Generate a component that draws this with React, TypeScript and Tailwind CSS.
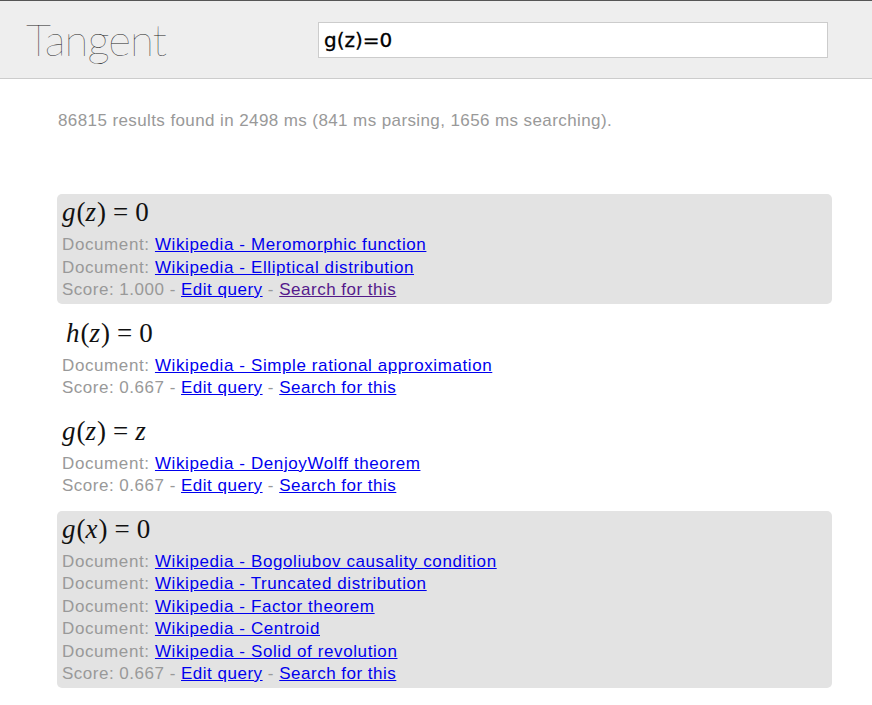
import React from 'react';

type Result = {
  formula: React.ReactNode;
  docs: string[];
  score: string;
  highlight: boolean;
  visited?: boolean;
  indent?: boolean;
};

const M: React.FC<{ children: React.ReactNode }> = ({ children }) => <i className="pr-[1px]">{children}</i>;
const Eq: React.FC = () => <span className="px-[7px]">=</span>;

const results: Result[] = [
  {
    formula: (
      <>
        <M>g</M>(<M>z</M>)<Eq />0
      </>
    ),
    docs: ['Wikipedia - Meromorphic function', 'Wikipedia - Elliptical distribution'],
    score: '1.000',
    highlight: true,
    visited: true,
  },
  {
    formula: (
      <>
        <M>h</M>(<M>z</M>)<Eq />0
      </>
    ),
    docs: ['Wikipedia - Simple rational approximation'],
    score: '0.667',
    highlight: false,
    indent: true,
  },
  {
    formula: (
      <>
        <M>g</M>(<M>z</M>)<Eq />
        <M>z</M>
      </>
    ),
    docs: ['Wikipedia - DenjoyWolff theorem'],
    score: '0.667',
    highlight: false,
  },
  {
    formula: (
      <>
        <M>g</M>(<M>x</M>)<Eq />0
      </>
    ),
    docs: [
      'Wikipedia - Bogoliubov causality condition',
      'Wikipedia - Truncated distribution',
      'Wikipedia - Factor theorem',
      'Wikipedia - Centroid',
      'Wikipedia - Solid of revolution',
    ],
    score: '0.667',
    highlight: true,
  },
];

const App: React.FC = () => {
  return (
    <div className="min-h-[705px] bg-white font-['Liberation_Sans',Arial,sans-serif]">
      <header className="h-[79px] bg-[#eeeeee] border-t border-t-[#555] border-b border-b-[#cccccc] flex items-start">
        <div className="ml-[26px] mt-[10px] w-[140px] text-[44px] leading-[56px] font-thin text-[#1a1a1a] font-['Lato',sans-serif] tracking-[-1px] whitespace-nowrap">
          Tangent
        </div>
        <div className="ml-[152px] mt-[21px] w-[510px] h-[36px] bg-white border border-[#cccccc] flex items-center pl-[5px]">
          <span className="text-[20px] text-black font-['DejaVu_Sans',sans-serif] [-webkit-text-stroke:0.3px_black]">
            g(z)=0
          </span>
        </div>
      </header>

      <div className="ml-[57px] w-[775px]">
        <p className="mt-[31px] pl-px text-[17px] leading-[22px] tracking-[0.4px] text-[#999999]">
          86815 results found in 2498 ms (841 ms parsing, 1656 ms searching).
        </p>

        <div className="mt-[62px]">
          {results.map((r, i) => (
            <div
              key={i}
              className={`rounded-[5px] pt-1 pb-[2px] px-[5px] mb-[11px] ${r.highlight ? 'bg-[#e3e3e3]' : ''}`}
            >
              <div
                className={`mb-2 text-[27px] leading-[28px] text-[#111] font-['Liberation_Serif','Times_New_Roman',serif] ${r.indent ? 'pl-[4px]' : ''}`}
              >
                {r.formula}
              </div>
              {r.docs.map((d) => (
                <div key={d} className="text-[17px] leading-[22.5px] tracking-[0.6px] text-[#999999]">
                  Document:{' '}
                  <a href="#" className="text-[#0000ee] underline">
                    {d}
                  </a>
                </div>
              ))}
              <div className="text-[17px] leading-[22.5px] tracking-[0.5px] text-[#999999]">
                Score: {r.score} -{' '}
                <a href="#" className="text-[#0000ee] underline">
                  Edit query
                </a>{' '}
                -{' '}
                <a href="#" className={`${r.visited ? 'text-[#551a8b]' : 'text-[#0000ee]'} underline`}>
                  Search for this
                </a>
              </div>
            </div>
          ))}
        </div>
      </div>
    </div>
  );
};

export default App;
